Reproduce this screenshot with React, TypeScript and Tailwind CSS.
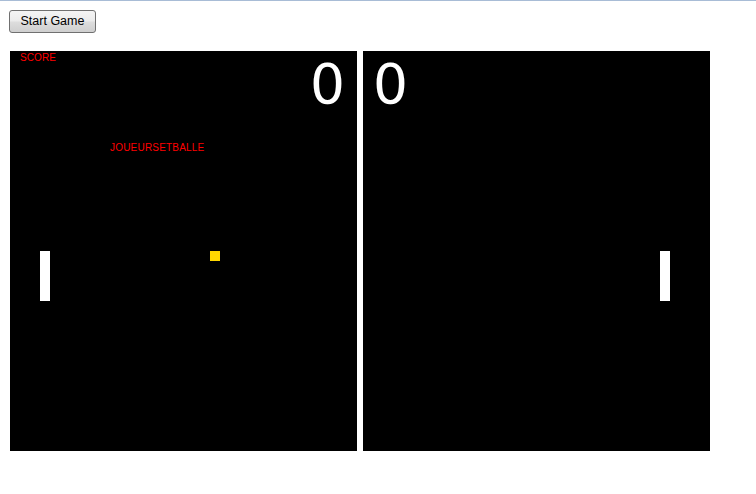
import React from 'react';

const font = { fontFamily: '"Liberation Sans", Arial, sans-serif' };
const digitFont = { fontFamily: '"DejaVu Sans", "Liberation Sans", sans-serif' };

function Paddle({ side }: { side: 'left' | 'right' }) {
  return (
    <div
      className={`absolute top-[200px] h-[50px] w-[10px] bg-white ${side === 'left' ? 'left-[30px]' : 'left-[297px]'}`}
    />
  );
}

export default function App() {
  return (
    <div className="min-h-screen border-t border-[#a8bcd6] bg-white" style={font}>
      <div className="pl-[9px] pt-[9px]">
        <button className="flex h-[23px] w-[87px] items-center justify-center rounded-[3px] border border-[#707070] bg-[linear-gradient(#f4f4f4_0%,#ebebeb_48%,#dddddd_52%,#cfcfcf_100%)] text-[12.5px] text-black">
          Start Game
        </button>
      </div>

      <div className="mt-[18px] flex gap-[6px] pl-[10px]">
        {/* left court */}
        <div className="relative h-[400px] w-[347px] bg-black">
          <span className="absolute left-[10px] top-[1px] text-[10px] leading-[12px] tracking-[0.1px] text-[#ff0000]">SCORE</span>
          <span className="absolute right-[12px] top-[6px] text-[55px] leading-[55px] text-white" style={digitFont}>0</span>
          <span className="absolute left-[100px] top-[91px] text-[10px] leading-[12px] tracking-[0.2px] text-[#ff0000]">JOUEURSETBALLE</span>
          <Paddle side="left" />
          <div className="absolute left-[200px] top-[200px] h-[10px] w-[10px] bg-[#ffd700]" />
        </div>

        {/* right court */}
        <div className="relative h-[400px] w-[347px] bg-black">
          <span className="absolute left-[10px] top-[6px] text-[55px] leading-[55px] text-white" style={digitFont}>0</span>
          <Paddle side="right" />
        </div>
      </div>
    </div>
  );
}
